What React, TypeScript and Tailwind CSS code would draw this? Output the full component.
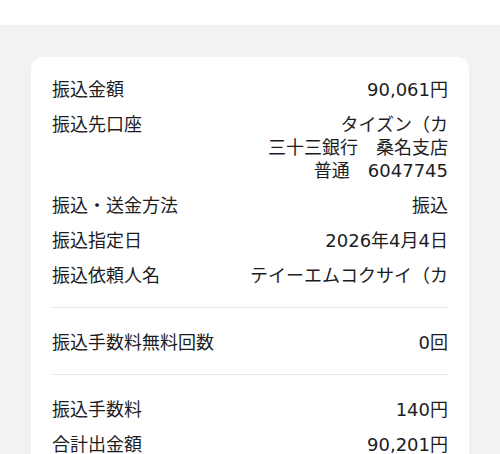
import React from 'react';

type Row = { label: string; value: string[] };

const SECTIONS: Row[][] = [
  [
    { label: '振込金額', value: ['90,061円'] },
    { label: '振込先口座', value: ['タイズン（カ', '三十三銀行　桑名支店', '普通　6047745'] },
    { label: '振込・送金方法', value: ['振込'] },
    { label: '振込指定日', value: ['2026年4月4日'] },
    { label: '振込依頼人名', value: ['テイーエムコクサイ（カ'] },
  ],
  [{ label: '振込手数料無料回数', value: ['0回'] }],
  [
    { label: '振込手数料', value: ['140円'] },
    { label: '合計出金額', value: ['90,201円'] },
  ],
];

const App: React.FC = () => {
  return (
    <div
      className="flex h-[454px] w-[500px] flex-col overflow-hidden bg-white text-[#1d1d1f]"
      style={{ fontFamily: '"DejaVu Sans", "Noto Sans CJK JP", sans-serif' }}
    >
      <div className="h-[25px] shrink-0 bg-white" />
      <div className="flex-1 shrink-0 bg-[#f2f2f4] px-[31px] pt-[32px]">
        <div className="rounded-[12px] bg-white px-[21px]">
          {SECTIONS.map((rows, i) => (
            <div
              key={i}
              className={`flex flex-col gap-[12px] ${
                i === 0 ? 'pb-[20px] pt-[21px]' : 'pb-[20px] pt-[23px]'
              } ${i > 0 ? 'border-t border-[#e6e6ea]' : ''}`}
            >
              {rows.map((row) => (
                <div key={row.label} className="flex items-start justify-between text-[18px] leading-[23px]">
                  <span>{row.label}</span>
                  <div className="flex flex-col items-end">
                    {row.value.map((v) => (
                      <span key={v} className="whitespace-pre">
                        {v}
                      </span>
                    ))}
                  </div>
                </div>
              ))}
            </div>
          ))}
        </div>
      </div>
    </div>
  );
};

export default App;
